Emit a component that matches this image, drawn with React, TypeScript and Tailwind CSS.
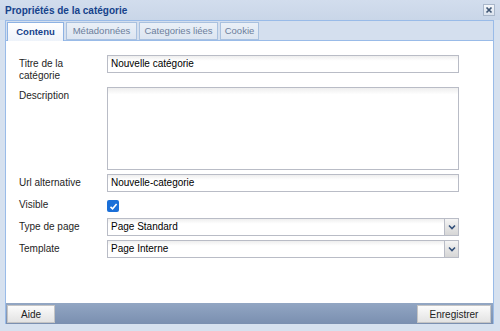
const font = { fontFamily: '"Liberation Sans", Arial, sans-serif' };

function TextInput({ value }: { value: string }) {
    return (
        <div className="h-[18px] w-[352px] border border-[#b9bcc6] bg-white bg-gradient-to-b from-[#eeeeee] to-white to-[30%] pl-[3px] text-[10px] leading-[16px] text-black">
            {value}
        </div>
    );
}

function Combo({ value }: { value: string }) {
    return (
        <div className="flex h-[18px] w-[352px]">
            <div className="flex-1 border border-[#b9bcc6] bg-white bg-gradient-to-b from-[#eeeeee] to-white to-[30%] pl-[3px] text-[10px] leading-[16px] text-black">
                {value}
            </div>
            <div className="flex w-[14px] items-center justify-center border border-l-0 border-[#b9bcc6] bg-gradient-to-b from-[#f4f4f4] to-[#d6d6d6]">
                <svg width="8" height="6" viewBox="0 0 8 6">
                    <path d="M1 1.5 L4 4.5 L7 1.5" fill="none" stroke="#33507a" strokeWidth="1.6" />
                </svg>
            </div>
        </div>
    );
}

function Label({ children }: { children: React.ReactNode }) {
    return <div className="w-[88px] shrink-0 pr-2 text-[10px] leading-[12px] text-[#1e1e1e]">{children}</div>;
}

export default function App() {
    const tabs = [
        { label: "Métadonnées", w: "w-[71px]" },
        { label: "Categories liées", w: "w-[79px]" },
        { label: "Cookie", w: "w-[39px]" },
    ];

    return (
        <div className="flex h-[331px] w-[500px] flex-col bg-[#d6e1ef]" style={font}>
            <div className="flex h-[20px] items-center justify-between bg-gradient-to-b from-[#d2dded] to-[#c9d6e8] pl-[5px] pr-[5px]">
                <span className="text-[10px] font-bold text-[#15428b]">Propriétés de la catégorie</span>
                <div className="flex h-[12px] w-[12px] items-center justify-center border border-[#a9b7ca] bg-gradient-to-b from-[#f3f6fa] to-[#dbe3ee]">
                    <svg width="8" height="8" viewBox="0 0 8 8">
                        <path d="M1.5 1.5 L6.5 6.5 M6.5 1.5 L1.5 6.5" stroke="#3f5674" strokeWidth="1.7" />
                    </svg>
                </div>
            </div>

            <div className="ml-[5px] flex w-[489px] flex-1 flex-col border-x border-[#99bbe8]">
                <div className="flex h-[21px] items-end gap-[2px] border-t border-b border-[#99bbe8] bg-[#d4dfee] pl-[1px]">
                    <div className="-mb-px flex h-[19px] w-[57px] items-center justify-center border border-b-0 border-[#8db2e3] bg-gradient-to-b from-white to-[#eef3fa] text-[9.5px] font-bold text-[#15428b]">
                        Contenu
                    </div>
                    {tabs.map((t) => (
                        <div
                            key={t.label}
                            className={`flex h-[18px] ${t.w} items-center justify-center border border-[#a9c1df] bg-gradient-to-b from-[#eaf0f7] to-[#dce5f1] text-[9.5px] text-[#6c7e9b]`}
                        >
                            {t.label}
                        </div>
                    ))}
                </div>

                <div className="flex-1 bg-white pl-[13px] pt-[14px]">
                    <div className="flex">
                        <div className="pt-[3px]">
                            <Label>
                                Titre de la
                                <br />
                                catégorie
                            </Label>
                        </div>
                        <TextInput value="Nouvelle catégorie" />
                    </div>

                    <div className="mt-[5px] flex">
                        <div className="pt-[3px]">
                            <Label>Description</Label>
                        </div>
                        <div className="h-[83px] w-[352px] border border-[#b9bcc6] bg-gradient-to-b from-[#eeeeee] to-white to-[8%]" />
                    </div>

                    <div className="mt-[4px] flex items-center">
                        <Label>Url alternative</Label>
                        <TextInput value="Nouvelle-categorie" />
                    </div>

                    <div className="mt-[6px] flex h-[14px]">
                        <div className="pt-[1px]">
                            <Label>Visible</Label>
                        </div>
                        <div className="mt-[2px] flex h-[12px] w-[12px] items-center justify-center rounded-[2px] bg-[#1a6fd8]">
                            <svg width="9" height="9" viewBox="0 0 9 9">
                                <path d="M1.5 4.8 L3.6 6.8 L7.6 2" fill="none" stroke="white" strokeWidth="1.6" />
                            </svg>
                        </div>
                    </div>

                    <div className="mt-[6px] flex items-center">
                        <Label>Type de page</Label>
                        <Combo value="Page Standard" />
                    </div>

                    <div className="mt-[4px] flex items-center">
                        <Label>Template</Label>
                        <Combo value="Page Interne" />
                    </div>
                </div>

                <div className="flex h-[21px] items-start justify-between bg-gradient-to-b from-[#92a6c3] to-[#7a8fb0] pl-[1px] pr-[2px] pt-[2px]">
                    <button className="h-[18px] w-[48px] border border-[#c4c4c4] bg-gradient-to-b from-[#fbfbfb] to-[#e3e3e3] text-[10px] text-[#222]">
                        Aide
                    </button>
                    <button className="h-[18px] w-[74px] border border-[#c4c4c4] bg-gradient-to-b from-[#fbfbfb] to-[#e3e3e3] text-[10px] text-[#222]">
                        Enregistrer
                    </button>
                </div>
            </div>
            <div className="h-[7px]" />
        </div>
    );
}
